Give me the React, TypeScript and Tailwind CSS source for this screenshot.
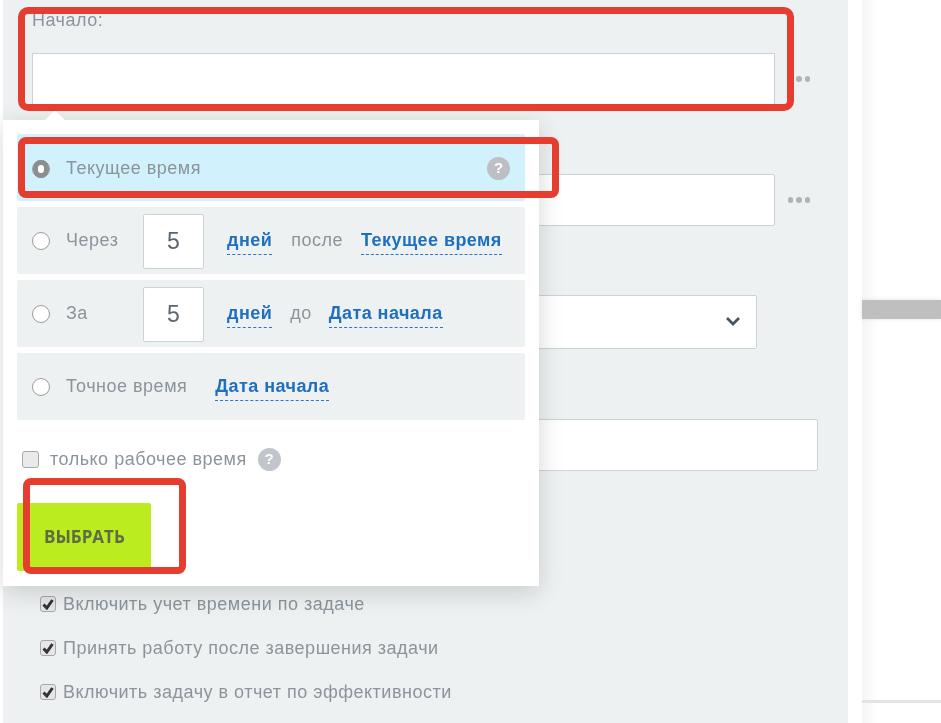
import React from "react";

function Radio({ checked = false }: { checked?: boolean }) {
  return (
    <span className="flex h-[18px] w-[18px] shrink-0 items-center justify-center rounded-full border border-[#9b9b9b] bg-white">
      {checked && <span className="h-[18px] w-[18px] rounded-full border-[5px] border-[#8c8f92] bg-white" />}
    </span>
  );
}

function Help({ className = "" }: { className?: string }) {
  return (
    <span className={`flex h-[23px] w-[23px] shrink-0 items-center justify-center rounded-full text-[15px] font-bold text-white ${className}`}>?</span>
  );
}

function Link({ children }: { children: React.ReactNode }) {
  return (
    <span className="mt-[4px] block border-b border-dashed border-[#2a77c9] pb-[4px] text-[18px] leading-[20px] font-bold tracking-[0.45px] text-[#1f6fc0]">{children}</span>
  );
}

function NumberBox() {
  return (
    <span className="mt-[2px] flex h-[55px] w-[61px] shrink-0 items-center justify-center rounded-[2px] border border-[#ccd2d8] bg-white text-[23px] text-[#5c6670]">5</span>
  );
}

const textCls = "text-[18px] tracking-[0.5px] text-[#8c949b]";

function Check({ label }: { label: string }) {
  return (
    <div className="flex h-[44px] items-center gap-[7px] pl-[1px]">
      <span className="flex h-[16px] w-[16px] items-center justify-center rounded-[3px] border border-[#a8a8a8] bg-[#e4e6e8]">
        <svg viewBox="0 0 12 12" className="h-[12px] w-[12px]">
          <path d="M1.5 6.5 L4.8 10 L10.5 2" fill="none" stroke="#333" strokeWidth="3" />
        </svg>
      </span>
      <span className={textCls}>{label}</span>
    </div>
  );
}

function Dots({ className = "" }: { className?: string }) {
  return (
    <span className={`flex items-center justify-end gap-[3px] ${className}`}>
      <span className="h-[5.5px] w-[5.5px] rounded-full bg-[#aeb3b8]" />
      <span className="h-[5.5px] w-[5.5px] rounded-full bg-[#aeb3b8]" />
      <span className="h-[5.5px] w-[5.5px] rounded-full bg-[#aeb3b8]" />
    </span>
  );
}

export default function App() {
  return (
    <div className="relative flex h-[723px] w-[941px] overflow-hidden bg-white font-['Liberation_Sans',sans-serif] blur-[0.5px]">
      <main className="relative ml-[3px] h-full w-[845px] bg-[#eef1f2] pl-[29px]">
        <div className="pt-[11px] text-[18px] leading-[19px] tracking-[0.5px] text-[#8c949b]">Начало:</div>
        <div className="mt-[23px] flex items-center">
          <div className="h-[52px] w-[743px] border border-[#ccd2d8] bg-white" />
          <Dots className="ml-[11px] w-[24px]" />
        </div>
        <div className="mt-[69px] flex items-center">
          <div className="h-[52px] w-[743px] rounded-[2px] border border-[#ccd2d8] bg-white" />
          <Dots className="ml-[11px] w-[24px]" />
        </div>
        <div className="mt-[69px] h-[54px] w-[725px] rounded-[2px] border border-[#ccd2d8] bg-white" />
        <div className="mt-[70px] h-[52px] w-[786px] rounded-[2px] border border-[#ccd2d8] bg-white" />
        <div className="mt-[111px] pl-[7px]">
          <Check label="Включить учет времени по задаче" />
          <Check label="Принять работу после завершения задачи" />
          <Check label="Включить задачу в отчет по эффективности" />
        </div>

        <svg viewBox="0 0 16 10" className="absolute left-[722px] top-[316px] h-[10px] w-[16px]">
          <path d="M2 2 L8 8 L14 2" fill="none" stroke="#4b5560" strokeWidth="2.8" />
        </svg>

        <div className="absolute left-0 top-[120px] z-10 h-[466px] w-[536px] bg-white px-[14px] pt-[14px] shadow-[0_6px_24px_rgba(0,0,0,0.16)]">
          <span className="absolute left-[45px] top-[-7px] h-[14px] w-[14px] rotate-45 bg-white" />
          <div className="relative flex h-[67px] items-center rounded-[2px] bg-[#d1f2fc] pl-[15px] pr-[15px] pt-[2px]">
            <Radio checked />
            <span className={`ml-[16px] ${textCls}`}>Текущее время</span>
            <Help className="ml-auto bg-[#bcc0c4]" />
          </div>
          <div className="mt-[6px] flex h-[67px] items-center rounded-[2px] bg-[#eef1f2] pl-[15px]">
            <Radio />
            <span className={`ml-[16px] w-[77px] ${textCls}`}>Через</span>
            <NumberBox />
            <span className="ml-[23px]"><Link>дней</Link></span>
            <span className={`ml-[19px] ${textCls}`}>после</span>
            <span className="ml-[18px]"><Link>Текущее время</Link></span>
          </div>
          <div className="mt-[6px] flex h-[67px] items-center rounded-[2px] bg-[#eef1f2] pl-[15px]">
            <Radio />
            <span className={`ml-[16px] w-[77px] ${textCls}`}>За</span>
            <NumberBox />
            <span className="ml-[23px]"><Link>дней</Link></span>
            <span className={`ml-[18px] ${textCls}`}>до</span>
            <span className="ml-[17px]"><Link>Дата начала</Link></span>
          </div>
          <div className="mt-[6px] flex h-[67px] items-center rounded-[2px] bg-[#eef1f2] pl-[15px]">
            <Radio />
            <span className={`ml-[16px] ${textCls}`}>Точное время</span>
            <span className="ml-[28px]"><Link>Дата начала</Link></span>
          </div>
          <div className="mt-[26px] flex items-center pl-[5px]">
            <span className="h-[17px] w-[17px] rounded-[3px] border border-[#a8a8a8] bg-[#e8eaec]" />
            <span className={`ml-[11px] ${textCls}`}>только рабочее время</span>
            <Help className="ml-[11px] bg-[#c0c6cc]" />
          </div>
          <button className="mt-[30px] flex h-[68px] w-[134px] items-center rounded-[2px] bg-[#bbec1f] pl-[27px] font-['Open_Sans',sans-serif] text-[17px] font-bold text-[#5f6b45]">ВЫБРАТЬ</button>
        </div>
      </main>

      <aside className="relative ml-[14px] flex-1 bg-gradient-to-r from-[#f5f5f5] to-white to-[16px]">
        <div className="mt-[300px] h-[19px] bg-[#bfbfbf] shadow-[0_0_4px_rgba(0,0,0,0.12)]" />
        <div className="absolute bottom-[20px] left-0 right-0 h-[3px] bg-[#e2e4e6]" />
      </aside>

      <div className="absolute left-[18px] top-[7px] z-20 h-[104px] w-[776px] rounded-[10px] border-[7px] border-[#e53e30]" />
      <div className="absolute left-[18px] top-[137px] z-20 h-[61px] w-[541px] rounded-[8px] border-[7px] border-[#e53e30]" />
      <div className="absolute left-[23px] top-[478px] z-20 h-[96px] w-[163px] rounded-[8px] border-[7px] border-[#e53e30]" />
    </div>
  );
}
